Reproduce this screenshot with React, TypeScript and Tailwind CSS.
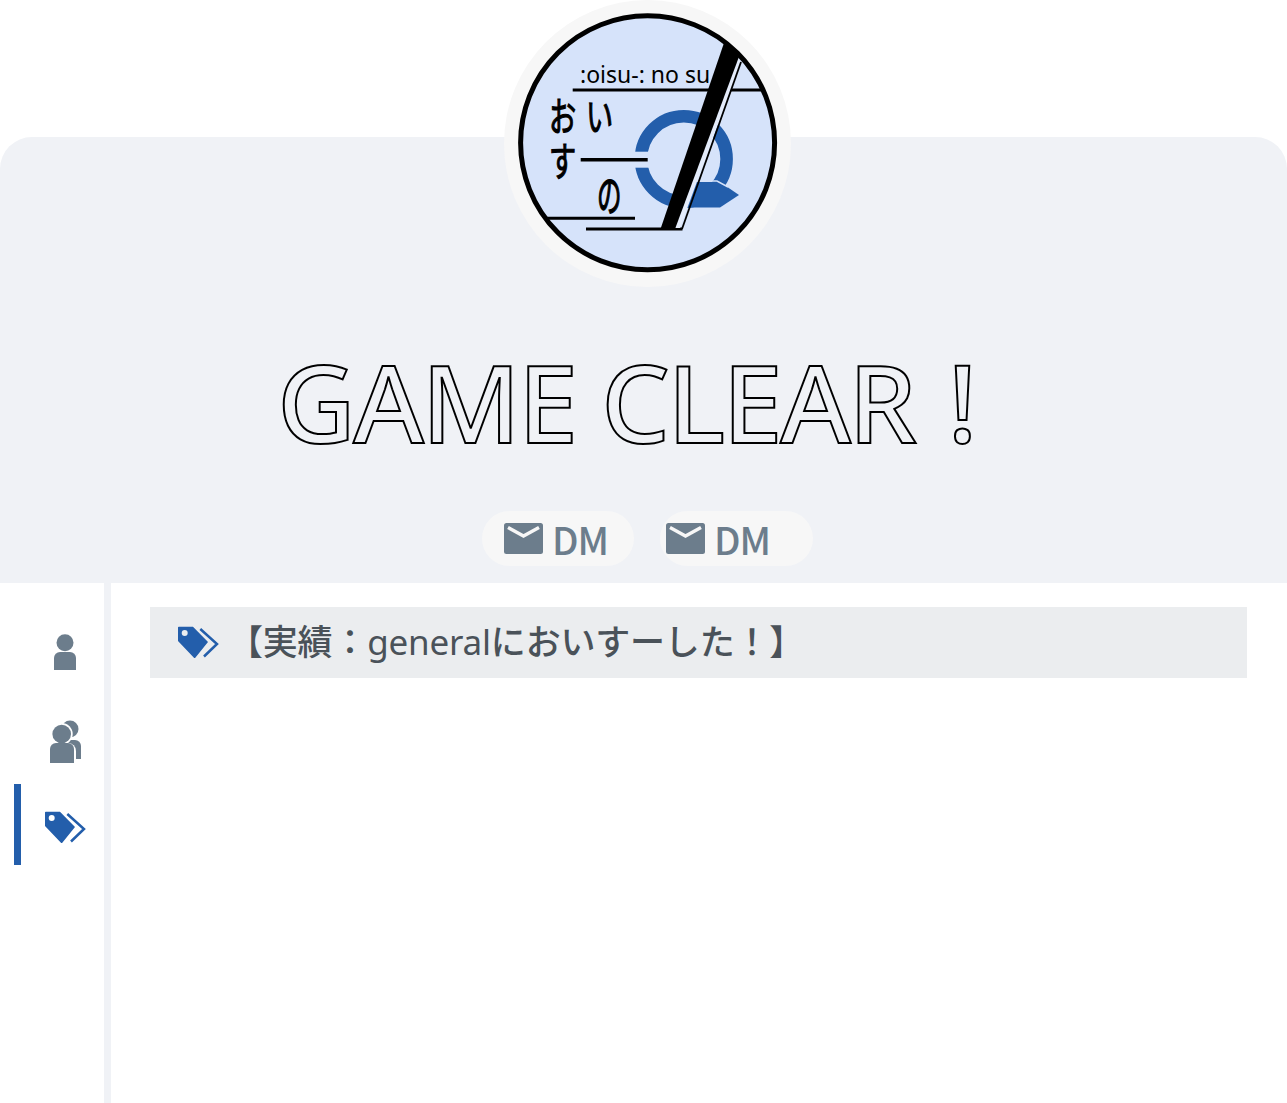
function Logo() {
  return (
    <svg viewBox="504 0 287 287" className="h-full w-full">
      <defs>
        <clipPath id="logo-clip">
          <circle cx="647.6" cy="142.8" r="127" />
        </clipPath>
      </defs>
      <circle cx="647.6" cy="142.8" r="127" fill="#d6e3fa" />
      <g clipPath="url(#logo-clip)">
        <circle cx="683.8" cy="159" r="42.8" fill="none" stroke="#235eab" strokeWidth="12.6" />
        <rect x="630" y="151.7" width="22" height="16" fill="#d6e3fa" />
        <polygon points="690,182 720,182 739,195 720,207.5 680,207.5" fill="#235eab" />
        <polyline points="688,181 717,181 728,187" fill="none" stroke="#d6e3fa" strokeWidth="1.5" />
        <line x1="572.7" y1="90" x2="765" y2="90" stroke="#000" strokeWidth="3" />
        <line x1="580.7" y1="159.7" x2="647.7" y2="159.7" stroke="#000" strokeWidth="3.5" />
        <line x1="530" y1="218.3" x2="635" y2="218.3" stroke="#000" strokeWidth="3" />
        <line x1="586" y1="229" x2="682.5" y2="229" stroke="#000" strokeWidth="3" />
        <polygon points="675,228 680,228 741,62 737,57" fill="#e4ecfb" />
        <line x1="682" y1="229" x2="741" y2="62" stroke="#000" strokeWidth="1.8" />
        <polygon points="660.5,229 675,229 740,54 725,40" fill="#000" />
      </g>
      <circle cx="647.6" cy="142.8" r="127" fill="none" stroke="#000" strokeWidth="5" />
      <text x="580" y="83" fontFamily="'Noto Sans', sans-serif" fontSize="23" fill="#000">:oisu-: no su</text>
      <text transform="translate(549 131) scale(0.8 1.17)" fontFamily="'Noto Sans CJK JP', sans-serif" fontSize="34" fill="#000" stroke="#000" strokeWidth="1">お</text>
      <text transform="translate(586 131) scale(0.8 1.17)" fontFamily="'Noto Sans CJK JP', sans-serif" fontSize="34" fill="#000" stroke="#000" strokeWidth="1">い</text>
      <text transform="translate(549 176) scale(0.8 1.17)" fontFamily="'Noto Sans CJK JP', sans-serif" fontSize="34" fill="#000" stroke="#000" strokeWidth="1">す</text>
      <text transform="translate(597 212) scale(0.72 1.3)" fontFamily="'Noto Sans CJK JP', sans-serif" fontSize="34" fill="#000" stroke="#000" strokeWidth="1">の</text>
    </svg>
  );
}

function MailIcon() {
  return (
    <svg viewBox="0 0 39 31" className="h-[31px] w-[39px] shrink-0">
      <rect width="39" height="31" rx="2.5" fill="#6c7d8c" />
      <path d="M4 4.5 19.5 13 35 4.5" fill="none" stroke="#f7f7f7" strokeWidth="3.4" />
    </svg>
  );
}

function PersonIcon() {
  return (
    <svg viewBox="0 0 22 36" className="h-[36px] w-[22px]">
      <circle cx="11" cy="8.7" r="8.5" fill="#6c7d8c" />
      <path d="M0 36V24a6 6 0 0 1 6-6h10a6 6 0 0 1 6 6v12z" fill="#6c7d8c" />
    </svg>
  );
}

function GroupIcon() {
  return (
    <svg viewBox="0 0 31 43" className="h-[43px] w-[31px]">
      <circle cx="20" cy="9" r="8.5" fill="#6c7d8c" />
      <path d="M14 20h11a6 6 0 0 1 6 6v13h-6z" fill="#6c7d8c" />
      <circle cx="11.7" cy="14" r="11" fill="#fff" />
      <circle cx="11.7" cy="14" r="9.3" fill="#6c7d8c" />
      <path d="M0 43V29a6 6 0 0 1 6-6h12a8 8 0 0 1 8 8v12z" fill="#fff" />
      <path d="M0 43V29a6 6 0 0 1 6-6h12a6 6 0 0 1 6 6v14z" fill="#6c7d8c" />
    </svg>
  );
}

function TagIcon() {
  return (
    <svg viewBox="0 0 41 33" className="h-[33px] w-[41px] shrink-0">
      <path
        fillRule="evenodd"
        d="M0 1.5a.8.8 0 0 1 .8-.8H15L30 16 17.500 31.500a1.200 1.200 0 0 1-1.800 0L0 15zM6.700 4a3 3 0 1 0 0 6 3 3 0 0 0 0-6z"
        fill="#235eab"
      />
      <path d="M22.300 3 39 18 26 30.500" fill="none" stroke="#235eab" strokeWidth="2.500" />
    </svg>
  );
}

function DmButton({ className }: { className: string }) {
  return (
    <div className={`flex h-[55px] items-center gap-[9px] rounded-full bg-[#f7f7f7] ${className}`}>
      <MailIcon />
      <span className="font-['Noto_Sans_CJK_JP',sans-serif] text-[38px] leading-none font-medium tracking-[-1px] text-[#6c7d8c]">DM</span>
    </div>
  );
}

export default function App() {
  return (
    <div className="min-h-[1103px] bg-white pt-[137px] font-['Noto_Sans','Noto_Sans_CJK_JP',sans-serif]">
      <header className="flex h-[446px] flex-col items-center rounded-t-[32px] bg-[#f0f2f6]">
        <div className="ml-[8px] -mt-[137px] h-[287px] w-[287px] shrink-0 rounded-full bg-[#f7f7f7]">
          <Logo />
        </div>
        <h1 className="mt-[40px] mr-[35px] text-[108px] leading-[150px] font-medium tracking-[-2.500px] whitespace-nowrap text-transparent [-webkit-text-stroke:2px_#000]">
          GAME CLEAR <span className="ml-[8px]">!</span>
        </h1>
        <div className="mt-[34px] ml-[8px] flex gap-[26px]">
          <DmButton className="w-[152px] pl-[22px]" />
          <DmButton className="w-[153px] pl-[6px]" />
        </div>
      </header>
      <div className="flex h-[520px]">
        <nav className="flex w-[111px] shrink-0 flex-col border-r-[7px] border-[#f0f2f6] pt-[31px] pl-[14px]">
          <a className="flex h-[85px] items-center justify-center border-l-[7px] border-transparent pb-[9px] pl-[4px]">
            <PersonIcon />
          </a>
          <a className="flex h-[85px] items-center justify-center border-l-[7px] border-transparent pt-[1px] pb-[1px] pl-[6px]">
            <GroupIcon />
          </a>
          <a className="flex h-[81px] items-center justify-center border-l-[7px] border-[#235eab] pt-[5px] pl-[6px]">
            <TagIcon />
          </a>
        </nav>
        <main className="flex-1 pt-[24px] pr-[40px] pl-[39px]">
          <div className="flex h-[71px] items-center gap-[9px] bg-[#ebedef] pl-[28px]">
            <TagIcon />
            <span className="text-[35px] font-medium tracking-[-0.2px] text-[#4a5259]">【実績：<span className="font-normal">general</span>においすーした！】</span>
          </div>
        </main>
      </div>
    </div>
  );
}
